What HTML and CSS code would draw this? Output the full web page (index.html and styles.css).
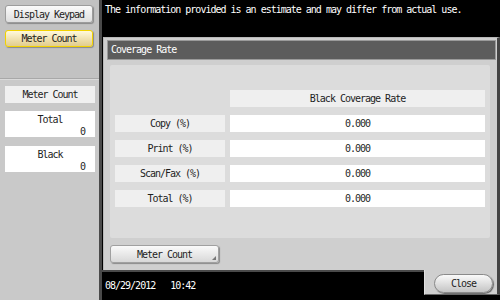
FILE: index.html
```html
<!DOCTYPE html>
<html lang="en">

<head>
    <meta charset="UTF-8">
    <title>Coverage Rate</title>
    <link rel="stylesheet" href="styles.css">
</head>

<body>
    <div class="screen">
        <aside class="side">
            <div class="side__top">
                <button class="key">Display Keypad</button>
                <button class="key key--on">Meter Count</button>
            </div>
            <div class="side__bottom">
                <div class="side__label">Meter Count</div>
                <div class="count">
                    <span class="count__name">Total</span>
                    <span class="count__value">0</span>
                </div>
                <div class="count">
                    <span class="count__name">Black</span>
                    <span class="count__value">0</span>
                </div>
            </div>
        </aside>
        <main class="main">
            <p class="notice">The information provided is an estimate and may differ from actual use.</p>
            <section class="panel">
                <div class="panel__head">Coverage Rate</div>
                <div class="panel__body">
                    <div class="rates">
                        <div></div>
                        <div class="rates__head">Black Coverage Rate</div>
                        <div class="rates__label">Copy (%)</div>
                        <div class="rates__value">0.000</div>
                        <div class="rates__label">Print (%)</div>
                        <div class="rates__value">0.000</div>
                        <div class="rates__label">Scan/Fax (%)</div>
                        <div class="rates__value">0.000</div>
                        <div class="rates__label">Total (%)</div>
                        <div class="rates__value">0.000</div>
                    </div>
                </div>
                <button class="tab-btn">Meter Count</button>
            </section>
            <div class="status">
                <span class="status__time">08/29/2012&nbsp;&nbsp;&nbsp;10:42</span>
                <div class="status__close">
                    <button class="close">Close</button>
                </div>
            </div>
        </main>
    </div>
</body>

</html>
```

FILE: styles.css
```css
body {
    margin: 0;
    background-color: #000;
}

.screen {
    display: flex;
    width: 500px;
    height: 300px;
    overflow: hidden;
    font-family: "DejaVu Sans Mono", monospace;
    font-size: 10px;
    letter-spacing: -1px;
    color: #1e1e1e;
}

button {
    font: inherit;
    letter-spacing: inherit;
    color: inherit;
    padding: 0;
    cursor: pointer;
}

/* left column */
.side {
    width: 99px;
    border-right: 3px solid #4a4a4a;
    display: flex;
    flex-direction: column;
    background-color: #c9c9c9;
}

.side__top {
    height: 79px;
    padding: 5px 0 0 5px;
    box-sizing: border-box;
    background-color: #c2c2c2;
    border-bottom: 1px solid #a8a8a8;
    display: flex;
    flex-direction: column;
    gap: 7px;
}

.key {
    width: 88px;
    height: 18px;
    border: 1px solid #9c9c9c;
    border-radius: 3px;
    background: linear-gradient(#fafafa, #dedede);
    box-shadow: 1px 1px 1px #8a8a8a;
}

.key--on {
    height: 17px;
    border-color: #f2d200;
    background: linear-gradient(#fff9dc, #e2cd8c);
}

.side__bottom {
    flex-grow: 1;
    padding: 6px 0 0 5px;
    border-top: 1px solid #dadada;
}

.side__label {
    width: 90px;
    height: 17px;
    line-height: 17px;
    text-align: center;
    background-color: #f0f0f0;
}

.count {
    width: 90px;
    height: 26px;
    margin-top: 8px;
    padding-top: 1px;
    box-sizing: border-box;
    background-color: #fff;
    display: flex;
    flex-direction: column;
}

.count + .count {
    margin-top: 9px;
}

.count__name {
    text-align: center;
    line-height: 15px;
}

.count__value {
    text-align: right;
    padding-right: 10px;
    line-height: 10px;
}

/* main area */
.main {
    flex-grow: 1;
    display: flex;
    flex-direction: column;
    background-color: #000;
}

.notice {
    margin: 0;
    height: 37px;
    padding: 4px 0 0 3px;
    box-sizing: border-box;
    line-height: 12px;
    color: #fff;
}

.panel {
    height: 233px;
    margin-left: 1px;
    box-sizing: border-box;
    padding: 2px 1px 0 3px;
    background-color: #cfcfcf;
    border-top: 1px solid #b8b8b8;
    border-left: 1px solid #b8b8b8;
    border-right: 3px solid #444;
}

.panel__head {
    height: 20px;
    box-sizing: border-box;
    line-height: 18px;
    padding-left: 3px;
    background-color: #5c5c5c;
    border: 1px solid #9a9a9a;
    color: #fff;
}

.panel__body {
    height: 173px;
    margin: 5px 6px 0 3px;
    box-sizing: border-box;
    padding: 25px 5px 0;
    background-color: #dcdcdc;
    border-radius: 2px;
}

.rates {
    display: grid;
    grid-template-columns: 110px 255px;
    grid-auto-rows: 17px;
    column-gap: 5px;
    row-gap: 8px;
    line-height: 17px;
    text-align: center;
}

.rates__head,
.rates__label {
    background-color: #efefef;
}

.rates__value {
    background-color: #fff;
}

.tab-btn {
    position: relative;
    display: block;
    width: 109px;
    height: 18px;
    margin: 7px 0 0 3px;
    border: 1px solid #a0a0a0;
    border-radius: 3px;
    background: linear-gradient(#fafafa, #d8d8d8);
    box-shadow: 1px 1px 1px #8a8a8a;
}

.tab-btn::after {
    content: "";
    position: absolute;
    right: 2px;
    bottom: 2px;
    border-left: 4px solid transparent;
    border-bottom: 4px solid #777;
}

/* bottom strip */
.status {
    flex-grow: 1;
    display: flex;
}

.status__time {
    flex-grow: 1;
    border-top: 2px solid #4a4a4a;
    padding: 8px 0 0 3px;
    line-height: 12px;
    color: #fff;
}

.status__close {
    width: 76px;
    height: 25px;
    box-sizing: border-box;
    padding: 4px 0 0 9px;
    background-color: #cfcfcf;
    border-left: 1px solid #e2e2e2;
    border-right: 3px solid #444;
    border-bottom: 1px solid #666;
}

.close {
    width: 59px;
    height: 19px;
    border: 1px solid #8a8a8a;
    border-radius: 10px;
    background: linear-gradient(#fafafa, #c4c4c4);
    box-shadow: 1px 1px 1px #666;
}
```
